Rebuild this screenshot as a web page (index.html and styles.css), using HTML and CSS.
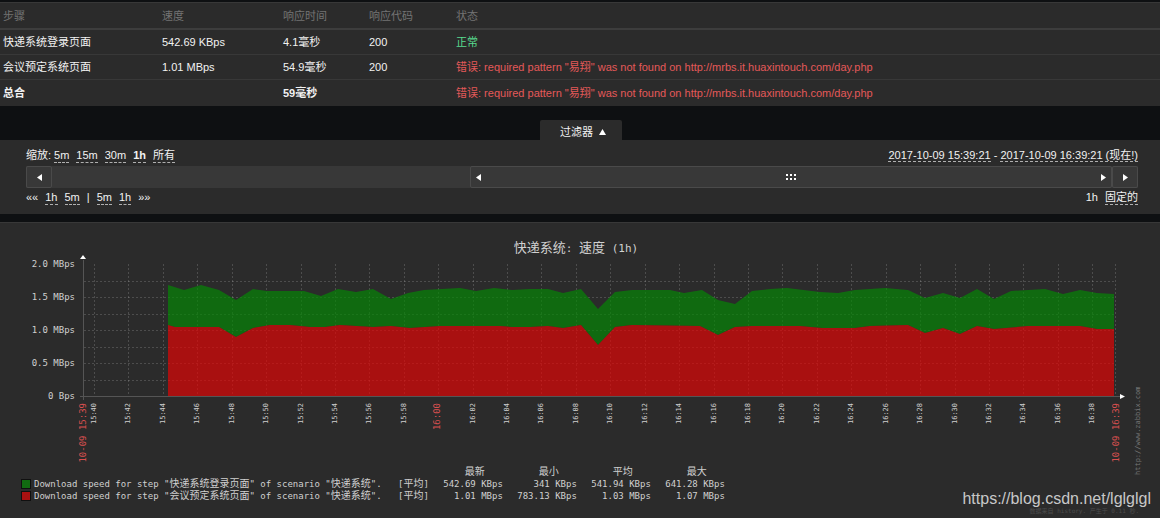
FILE: index.html
```html
<!DOCTYPE html>
<html lang="zh-CN">
<head>
<meta charset="utf-8">
<title>快递系统</title>
<link rel="stylesheet" href="styles.css">
</head>
<body>
<main class="page">
  <table class="steps">
    <thead>
      <tr><th class="col-step">步骤</th><th class="col-speed">速度</th><th class="col-time">响应时间</th><th class="col-code">响应代码</th><th>状态</th></tr>
    </thead>
    <tbody>
      <tr><td>快递系统登录页面</td><td>542.69 KBps</td><td>4.1毫秒</td><td>200</td><td class="ok">正常</td></tr>
      <tr><td>会议预定系统页面</td><td>1.01 MBps</td><td>54.9毫秒</td><td>200</td><td class="error">错误: required pattern "易翔" was not found on http://mrbs.it.huaxintouch.com/day.php</td></tr>
      <tr><td class="total">总合</td><td></td><td class="total">59毫秒</td><td></td><td class="error">错误: required pattern "易翔" was not found on http://mrbs.it.huaxintouch.com/day.php</td></tr>
    </tbody>
  </table>

  <div class="filter-tab">
    <button class="filter-toggle" type="button">过滤器 <svg class="arrow" viewBox="0 0 7 6"><path d="M3.5 0 7 6H0z"/></svg></button>
  </div>

  <section class="filter">
    <div class="filter-row">
      <div class="links"><span class="zoom-label">缩放:</span><a href="#">5m</a><a href="#">15m</a><a href="#">30m</a><a href="#" class="selected">1h</a><a href="#">所有</a></div>
      <div class="range"><a href="#">2017-10-09 15:39:21</a> - <a href="#">2017-10-09 16:39:21 (现在!)</a></div>
    </div>
    <div class="scrollbar">
      <button class="step-button" type="button" aria-label="后退"><svg class="side-arrow" viewBox="0 0 5 7"><path d="M5 0v7L0 3.5z"/></svg></button>
      <div class="track"></div>
      <div class="thumb">
        <svg class="side-arrow" viewBox="0 0 5 7"><path d="M5 0v7L0 3.5z"/></svg>
        <svg class="grip" viewBox="0 0 10 6"><path d="M0 0h2v2H0zM4 0h2v2H4zM8 0h2v2H8zM0 4h2v2H0zM4 4h2v2H4zM8 4h2v2H8z"/></svg>
        <svg class="side-arrow" viewBox="0 0 5 7"><path d="M0 0v7l5-3.5z"/></svg>
      </div>
      <button class="step-button" type="button" aria-label="前进"><svg class="side-arrow" viewBox="0 0 5 7"><path d="M0 0v7l5-3.5z"/></svg></button>
    </div>
    <div class="filter-row">
      <div class="links"><span>««</span><a href="#">1h</a><a href="#">5m</a><span>|</span><a href="#">5m</a><a href="#">1h</a><span>»»</span></div>
      <div class="links"><span>1h</span><a href="#">固定的</a></div>
    </div>
  </section>

  <section class="graph">
    <h2 class="graph-title"><span class="han">快递系统</span>: <span class="han">速度</span> (1h)</h2>
    <svg class="chart" viewBox="0 256 1160 208" role="img" aria-label="速度">
      <g id="grid" class="grid"></g>
      <polygon class="area-green" points="168,325 168,285 184,290 201,285 219,290 236,300 253,289 267,291 304,291 321,296 338,289 356,292 373,289 391,299 408,293 424,290 460,288 476,291 494,288 512,290 530,289 548,289 563,293 581,289 598,309 615,292 632,290 670,290 684,293 702,290 718,300 735,304 752,291 770,289 787,288 820,292 838,293 855,290 885,288 908,290 925,298 943,293 960,298 977,289 994,299 1011,291 1045,289 1063,294 1080,290 1097,293 1114,294 1114,329 1097,329 1080,326 1028,326 994,329 977,326 960,334 943,328 925,333 908,325 870,326 855,328 822,328 800,326 752,326 735,327 718,335 700,326 632,325 615,327 598,345 581,325 563,328 548,326 530,327 512,327 500,326 440,326 410,328 391,326 373,327 340,325 325,327 310,327 290,325 270,325 253,328 236,337 219,327 175,327"/>
      <polygon class="area-red" points="168,396 168,325 175,327 219,327 236,337 253,328 270,325 290,325 310,327 325,327 340,325 373,327 391,326 410,328 440,326 500,326 512,327 530,327 548,326 563,328 581,325 598,345 615,327 632,325 700,326 718,335 735,327 752,326 800,326 822,328 855,328 870,326 908,325 925,333 943,328 960,334 977,326 994,329 1028,326 1080,326 1097,329 1114,329 1114,396"/>
      <path class="axis" d="M83.500 260V400M80 396.500H1120"/>
      <path class="axis-tip" d="M83 255l3 4h-6zM1120 394l5 2.500-5 2.500z"/>
      <g id="labels"></g>
      <text class="site" transform="translate(1140 475) rotate(-90)">http://www.zabbix.com</text>
    </svg>
    <table class="legend">
      <thead>
        <tr><td class="swatch-cell"></td><td class="name"></td><td class="func"></td><th>最新</th><th>最小</th><th>平均</th><th>最大</th></tr>
      </thead>
      <tbody>
        <tr><td class="swatch-cell"><span class="swatch green"></span></td><td class="name">Download speed for step "<span class="han">快递系统登录页面</span>" of scenario "<span class="han">快递系统</span>".</td><td class="func">[<span class="han">平均</span>]</td><td>542.69 KBps</td><td>341 KBps</td><td>541.94 KBps</td><td>641.28 KBps</td></tr>
        <tr><td class="swatch-cell"><span class="swatch red"></span></td><td class="name">Download speed for step "<span class="han">会议预定系统页面</span>" of scenario "<span class="han">快递系统</span>".</td><td class="func">[<span class="han">平均</span>]</td><td>1.01 MBps</td><td>783.13 KBps</td><td>1.03 MBps</td><td>1.07 MBps</td></tr>
      </tbody>
    </table>
    <p class="generated">数据来自 history. 产生于 0.11 秒.</p>
    <div class="watermark">https://blog.csdn.net/lglglgl</div>
  </section>
</main>
<script src="chart.js"></script>
</body>
</html>
```
FILE: styles.css
```css
* { box-sizing: border-box; }

body {
  margin: 0;
  background: #0e1012;
  color: #f2f2f2;
  font: 11px/16px "Liberation Sans", "Noto Sans CJK SC", sans-serif;
}

a { color: inherit; text-decoration: none; border-bottom: 1px dashed #b0b0b0; }
button { font: inherit; color: inherit; padding: 0; }
svg { fill: #ffffff; }

.page { display: flex; flex-direction: column; min-height: 100vh; padding-top: 2px; }

.steps {
  width: 100%;
  table-layout: fixed;
  border-collapse: separate;
  border-spacing: 0;
  background: #2b2b2b;
  border-top: 1px solid #383838;
}
.steps th { height: 27px; padding: 0 3px; text-align: left; font-weight: normal; color: #737373; border-bottom: 2px solid #3d3d3d; }
.steps td { height: 25px; padding: 0 3px; white-space: nowrap; border-bottom: 1px solid #383838; }
.steps tr:last-child td { height: 26px; border-bottom: 0; }
.col-step { width: 159px; }
.col-speed { width: 121px; }
.col-time { width: 86px; }
.col-code { width: 87px; }
.steps .total { font-weight: bold; }
.steps .ok { color: #59db8f; }
.steps .error { color: #e45959; }

.filter-tab { display: flex; justify-content: center; padding: 14px 0 0 2px; }
.filter-toggle {
  display: flex;
  align-items: center;
  justify-content: center;
  gap: 6px;
  width: 82px;
  height: 20px;
  padding: 3px 0 0 4px;
  background: #2b2b2b;
  border: 0;
  border-radius: 2px 2px 0 0;
}
.arrow { width: 7px; height: 6px; }

.filter { padding: 8px 22px 9px 26px; background: #2b2b2b; }
.filter-row { display: flex; justify-content: space-between; line-height: 14px; }
.links { display: flex; gap: 7px; }
.zoom-label { margin-right: -4px; }
.selected { font-weight: bold; }
.filter-row a { height: 15px; }

.scrollbar { display: flex; height: 22px; margin: 3px 0 2px; background: #383838; }
.step-button, .thumb { display: flex; align-items: center; background: #383838; border: 1px solid #4a4a4a; border-radius: 2px; }
.step-button { width: 26px; justify-content: center; }
.track { flex: 418; }
.thumb { flex: 630; justify-content: space-between; padding: 0 5px; }
.side-arrow { width: 5px; height: 7px; }
.grip { width: 10px; height: 6px; }

.graph {
  position: relative;
  flex: 1;
  margin-top: 8px;
  background: #2b2b2b;
  border-top: 1px solid #383838;
  color: #d0d0d0;
  font: 9px/12px "DejaVu Sans Mono", "Noto Sans CJK SC", monospace;
}
.han { font-size: 10px; }
.graph-title { margin: 0; padding: 18px 8px 0 0; text-align: center; font-size: 11px; line-height: 14px; font-weight: normal; }
.graph-title .han { font-size: 13px; }
.chart { display: block; width: 100%; overflow: visible; }
.area-green { fill: rgba(6, 134, 6, 0.7); }
.area-red { fill: rgba(223, 6, 6, 0.7); }
.grid path { fill: none; stroke: #ffffff; stroke-opacity: 0.16; stroke-dasharray: 2 2; }
.axis { fill: none; stroke: #555555; }
.label { fill: #d0d0d0; font-size: 9px; }
.tick { fill: #d0d0d0; font-size: 7px; }
.major { fill: #d84f4f; font-size: 9px; }
.site { fill: #777777; font-size: 7px; }

.legend { margin: 2px 0 0 21px; border-collapse: collapse; }
.legend td, .legend th { width: 74px; height: 12px; padding: 0; line-height: 12px; text-align: right; font-weight: normal; white-space: nowrap; }
.legend th { padding-right: 18px; font-size: 10px; }
.legend .swatch-cell { width: 13px; }
.legend .name { width: 364px; text-align: left; }
.legend .func { width: 26px; text-align: left; }
.swatch { display: block; width: 10px; height: 10px; border: 1px solid #101010; }
.green { background: #116b11; }
.red { background: #a91111; }

.generated { position: absolute; right: 21px; bottom: 2px; margin: 0; color: #4c4c4c; font-size: 6px; line-height: 10px; }
.watermark { position: absolute; right: 9px; bottom: 9px; color: #c8c8c8; font: 16px/20px "Liberation Sans", sans-serif; }
```
FILE: chart.js
```js
const NS = "http://www.w3.org/2000/svg";
const grid = document.getElementById("grid");
const labels = document.getElementById("labels");

function line(d) {
  const path = document.createElementNS(NS, "path");
  path.setAttribute("d", d);
  grid.appendChild(path);
}

function text(content, className, attributes) {
  const node = document.createElementNS(NS, "text");
  node.textContent = content;
  node.setAttribute("class", className);
  for (const name in attributes) node.setAttribute(name, attributes[name]);
  labels.appendChild(node);
}

function vertical(content, className, x) {
  text(content, className, { transform: `translate(${x} 403) rotate(-90)`, "text-anchor": "end" });
}

for (let i = 1; i < 8; i++) {
  line(`M84 ${Math.round(396 - i * 16.5) + 0.5}H1115`);
}

["0 Bps", "0.5 MBps", "1.0 MBps", "1.5 MBps", "2.0 MBps"].forEach((value, i) => {
  text(value, "label", { x: 75, y: 399 - i * 33, "text-anchor": "end" });
});

for (let i = 0; i < 30; i++) {
  const minute = 40 + i * 2;
  const x = Math.round(94 + i * 34.42);
  const time = `${15 + Math.floor(minute / 60)}:${String(minute % 60).padStart(2, "0")}`;
  line(`M${x + 0.5} 264V396`);
  vertical(time, time === "16:00" ? "major" : "tick", x + 2);
}
line("M1115.5 264V396");
vertical("10-09 15:39", "major", 86);
vertical("10-09 16:39", "major", 1119);
```
